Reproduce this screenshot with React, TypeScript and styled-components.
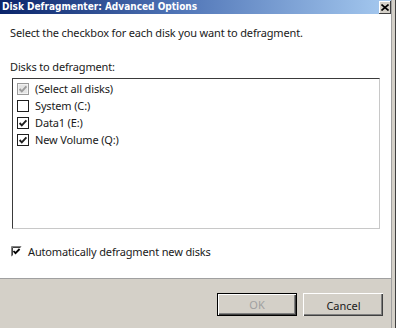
import React, { FC } from "react";
import styled, { createGlobalStyle } from "styled-components";

const GlobalStyle = createGlobalStyle`
  html, body {
    margin: 0;
    padding: 0;
    background: #d4d0c8;
  }
`;

type Disk = {
  label: string;
  checked: boolean;
  disabled?: boolean;
};

const disks: Disk[] = [
  { label: "(Select all disks)", checked: true, disabled: true },
  { label: "System (C:)", checked: false },
  { label: "Data1 (E:)", checked: true },
  { label: "New Volume (Q:)", checked: true },
];

type BoxProps = {
  checked: boolean;
  disabled?: boolean;
};

const CheckBox: FC<BoxProps> = ({ checked, disabled }) => {
  const ink = disabled ? "#9a9a9a" : "#1e1e1e";
  return (
    <svg width="12" height="12" viewBox="0 0 12 12">
      <rect x="0.5" y="0.5" width="11" height="11" fill="#fff" stroke={ink} />
      {disabled && <rect x="1.5" y="1.5" width="9" height="9" fill="#e4e4e4" />}
      {checked && (
        <path
          d="M2.6 6 L4.8 8.3 L9.4 3.4"
          fill="none"
          stroke={ink}
          strokeWidth="1.9"
        />
      )}
    </svg>
  );
};

const ClassicCheck: FC<BoxProps> = ({ checked }) => (
  <svg width="11" height="11" viewBox="0 0 11 11">
    <rect x="0" y="0" width="11" height="11" fill="#ffffff" />
    <path d="M0.5 10.5 V0.5 H10.5" fill="none" stroke="#808080" />
    <path d="M1.5 9.5 V1.5 H9.5" fill="none" stroke="#404040" />
    <path d="M0.5 10.5 H10.5 V0.5" fill="none" stroke="#ffffff" />
    {checked && (
      <path
        d="M2.5 5 L4.5 7.2 L8.6 3"
        fill="none"
        stroke="#000"
        strokeWidth="1.8"
      />
    )}
  </svg>
);

const App: FC = () => {
  return (
    <>
      <GlobalStyle />
      <StyledWindow>
        <Main>
          <TitleBar>
            <span className="title">Disk Defragmenter: Advanced Options</span>
            <CloseButton>
              <svg width="8" height="7" viewBox="0 0 8 7">
                <path d="M0.5 0.5 L7.5 6.5 M7.5 0.5 L0.5 6.5" stroke="#000" strokeWidth="1.6" />
              </svg>
            </CloseButton>
          </TitleBar>

          <Content>
            <Intro>Select the checkbox for each disk you want to defragment.</Intro>
            <FieldLabel>Disks to defragment:</FieldLabel>
            <ListBox>
              {disks.map((d) => (
                <ListRow key={d.label}>
                  <CheckBox checked={d.checked} disabled={d.disabled} />
                  <span>{d.label}</span>
                </ListRow>
              ))}
            </ListBox>
            <AutoRow>
              <ClassicCheck checked />
              <span>Automatically defragment new disks</span>
            </AutoRow>
          </Content>

          <Footer>
            <Button isDefault disabled>
              OK
            </Button>
            <Button>Cancel</Button>
          </Footer>
        </Main>
        <Frame />
      </StyledWindow>
    </>
  );
};

const StyledWindow = styled.div`
  width: 396px;
  height: 328px;
  display: flex;
  overflow: hidden;
  font-family: "Noto Sans", "Open Sans", sans-serif;
  font-size: 11px;
  letter-spacing: -0.15px;
  color: #1a1a1a;
`;

const Main = styled.div`
  flex: 1;
  display: flex;
  flex-direction: column;
  min-width: 0;
`;

const Frame = styled.div`
  width: 5px;
  background: #d4d0c8;
  border-left: 1px solid #a0a0a0;
  border-right: 1px solid #404040;
  box-sizing: border-box;
`;

const TitleBar = styled.div`
  height: 14px;
  display: flex;
  align-items: center;
  justify-content: space-between;
  background: linear-gradient(to right, #0a246a 0%, #4f74b6 45%, #a6caf0 100%);
  padding: 0 0 0 2px;

  .title {
    font-family: "DejaVu Sans Condensed", "DejaVu Sans", sans-serif;
    font-weight: bold;
    font-size: 10px;
    letter-spacing: 0;
    line-height: 14px;
    color: #ffffff;
    white-space: nowrap;
  }
`;

const CloseButton = styled.div`
  width: 12px;
  height: 13px;
  display: flex;
  align-items: center;
  justify-content: center;
  background: #d4d0c8;
  box-shadow: inset -1px -1px #404040, inset 1px 1px #ffffff;
`;

const Content = styled.div`
  flex: 1;
  background: #ffffff;
  padding: 11px 11px 0 10px;
  display: flex;
  flex-direction: column;
`;

const Intro = styled.div`
  line-height: 16px;
  white-space: nowrap;
`;

const FieldLabel = styled.div`
  line-height: 16px;
  margin-top: 18px;
`;

const ListBox = styled.div`
  margin: 3px 0 0 2px;
  height: 151px;
  box-sizing: border-box;
  border-style: solid;
  border-width: 1px;
  border-color: #3a3a3a #c8c8c8 #c8c8c8 #3a3a3a;
  padding: 1px 0 0 4px;
`;

const ListRow = styled.div`
  height: 17px;
  display: flex;
  align-items: center;
  gap: 6px;
  white-space: nowrap;
`;

const AutoRow = styled.div`
  margin: 14px 0 0 1px;
  height: 16px;
  display: flex;
  align-items: center;
  gap: 6px;
`;

const Footer = styled.div`
  height: 50px;
  box-sizing: border-box;
  background: #d4d0c8;
  border-top: 1px solid #a0a0a0;
  padding: 14px 8px 0 0;
  display: flex;
  justify-content: flex-end;
  align-items: flex-start;
  gap: 6px;
`;

const Button = styled.button<{ isDefault?: boolean }>`
  width: 80px;
  height: 23px;
  margin: 0;
  padding: 0;
  background: #d4d0c8;
  font-family: "Noto Sans", "Open Sans", sans-serif;
  font-size: 11px;
  color: ${(p) => (p.disabled ? "#a0a0a0" : "#1a1a1a")};
  border-style: solid;
  border-width: ${(p) => (p.isDefault ? "1px" : "1px 0 0 1px")};
  border-color: ${(p) => (p.isDefault ? "#000000" : "#ffffff")};
  box-shadow: ${(p) =>
    p.isDefault
      ? "inset 1px 1px #ffffff, inset -1px -1px #404040, inset -2px -2px #808080"
      : "inset -1px -1px #404040, inset -2px -2px #808080"};
`;

export default App;
